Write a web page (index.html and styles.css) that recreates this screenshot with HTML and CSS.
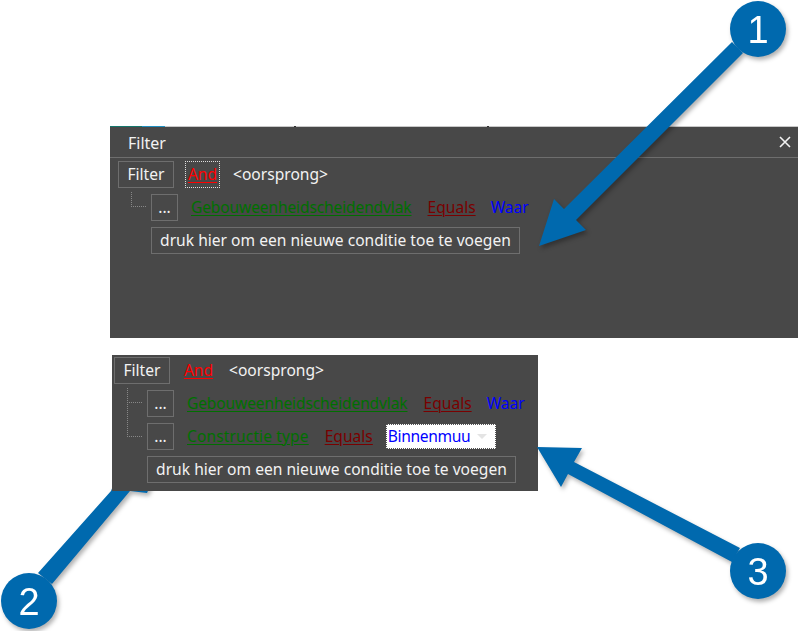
FILE: index.html
```html
<!doctype html>
<html lang="nl">
<head>
  <meta charset="UTF-8">
  <meta name="viewport" content="width=device-width, initial-scale=1.0">
  <title>Filter</title>
  <link rel="stylesheet" href="styles.css">
</head>
<body>
  <div class="page">
    <!-- arrow 2 runs under the second panel -->
    <svg class="arrows arrows-under" viewBox="0 0 798 631">
      <polygon points="38,573 52,584 130,491 147,493 175,430 125,455 111,491"/>
      <circle cx="29" cy="601" r="28"/>
      <text x="29" y="615">2</text>
    </svg>

    <div class="panel panel-dialog">
      <div class="top-strip"></div>
      <div class="title-bar">
        <span>Filter</span>
        <svg class="close" viewBox="0 0 12 12">
          <path d="M1 1L11 11M11 1L1 11"/>
        </svg>
      </div>
      <div class="filter-body">
        <div class="row">
          <button class="btn btn-filter">Filter</button>
          <a class="link op focused">And</a>
          <span class="origin">&lt;oorsprong&gt;</span>
        </div>
        <div class="row">
          <span class="branch"></span>
          <button class="btn btn-dots">...</button>
          <a class="link field field-long">Gebouweenheidscheidendvlak</a>
          <a class="link equals">Equals</a>
          <a class="link value">Waar</a>
        </div>
        <div class="row row-add">
          <button class="btn btn-add">druk hier om een nieuwe conditie toe te voegen</button>
        </div>
      </div>
    </div>

    <div class="panel panel-plain">
      <div class="filter-body">
        <div class="row">
          <button class="btn btn-filter">Filter</button>
          <a class="link op">And</a>
          <span class="origin">&lt;oorsprong&gt;</span>
        </div>
        <div class="row">
          <span class="branch"></span>
          <button class="btn btn-dots">...</button>
          <a class="link field field-long">Gebouweenheidscheidendvlak</a>
          <a class="link equals">Equals</a>
          <a class="link value">Waar</a>
        </div>
        <div class="row">
          <span class="branch branch-long"></span>
          <button class="btn btn-dots">...</button>
          <a class="link field field-short">Constructie type</a>
          <a class="link equals">Equals</a>
          <div class="select">
            <span class="select-text">Binnenmuu</span>
            <span class="select-caret"></span>
          </div>
        </div>
        <div class="row row-add">
          <button class="btn btn-add">druk hier om een nieuwe conditie toe te voegen</button>
        </div>
      </div>
    </div>

    <!-- arrows 1 and 3 lie on top -->
    <svg class="arrows arrows-over" viewBox="0 0 798 631">
      <polygon points="732,42 743,53 576,220 586,230 539,246 554,199 564,209"/>
      <circle cx="758" cy="29" r="28"/>
      <text x="758" y="43">1</text>
      <polygon points="740,548 732,562 568,474 561,487 537,447 582,448 574,462"/>
      <circle cx="758" cy="571" r="28"/>
      <text x="758" y="585">3</text>
    </svg>
  </div>
</body>
</html>
```

FILE: styles.css
```css
:root {
  --panel: #484848;
  --line: #6e6e6e;
  --text: #f2f2f2;
  --arrow: #0069ae;
}

* {
  box-sizing: border-box;
  margin: 0;
  padding: 0;
}

body {
  background: white;
  font-family: "Noto Sans", sans-serif;
  font-size: 15.6px;
  line-height: 21px;
}

.page {
  position: relative;
  width: 798px;
  height: 631px;
  overflow: hidden;
  padding-top: 127px;
}

.arrows {
  position: absolute;
  left: 0;
  top: 0;
  width: 798px;
  height: 631px;
  filter: drop-shadow(2px 3px 2px rgba(0, 0, 0, 0.3));
}

.arrows polygon,
.arrows circle {
  fill: var(--arrow);
}

.arrows text {
  fill: white;
  font-family: "Liberation Sans", sans-serif;
  font-size: 38px;
  text-anchor: middle;
}

.arrows-under {
  z-index: 0;
}

.arrows-over {
  z-index: 2;
}

.panel {
  position: relative;
  z-index: 1;
  background: var(--panel);
  color: var(--text);
}

.panel-dialog {
  height: 211px;
  margin-left: 110px;
}

.panel-plain {
  width: 426px;
  height: 136px;
  margin-top: 17px;
  margin-left: 112px;
  padding: 2px;
}

.top-strip {
  position: absolute;
  left: 0;
  right: 0;
  top: -1px;
  height: 1px;
  background: linear-gradient(90deg, #15766c 0, #15766c 32px, #1f8fc0 32px, #1f8fc0 55px, #c8c8c8 55px, #c8c8c8 184px, #333 184px, #333 186px, #c8c8c8 186px, #c8c8c8 377px, #333 377px, #333 379px, #c8c8c8 379px);
}

.title-bar {
  display: flex;
  justify-content: space-between;
  align-items: center;
  height: 31px;
  padding: 2px 7px 0 18px;
  border-bottom: 1px solid var(--line);
  font-size: 16px;
}

.close {
  width: 12px;
  height: 12px;
  margin-top: -2px;
  fill: none;
  stroke: #f2f2f2;
  stroke-width: 1.6;
}

.panel-dialog .filter-body {
  padding: 3px 8px 0;
}

.filter-body {
  display: flex;
  flex-direction: column;
  gap: 6px;
}

.row {
  display: flex;
  align-items: center;
  height: 27px;
}

.btn {
  height: 27px;
  background: transparent;
  border: 1px solid var(--line);
  color: var(--text);
  font: inherit;
  white-space: nowrap;
}

.btn-filter {
  width: 56px;
}

.btn-dots {
  width: 27px;
}

.btn-add {
  width: 369px;
}

.row-add {
  padding-left: 33px;
}

.branch {
  align-self: flex-start;
  flex: none;
  width: 15px;
  height: 15px;
  margin: -2px 5px 0 13px;
  border-left: 1px dotted #888;
  border-bottom: 1px dotted #888;
}

.branch-long {
  height: 33px;
  margin-top: -19px;
  margin-bottom: auto;
}

.link {
  text-decoration: underline;
  text-decoration-thickness: 1px;
  text-underline-offset: 2px;
  white-space: nowrap;
}

.origin {
  margin-left: 13px;
}

.op {
  width: 35px;
  margin-left: 11px;
  height: 27px;
  line-height: 25px;
  text-align: center;
  border: 1px dotted transparent;
  color: #ff0000;
}

.focused {
  border-color: #ddd;
}

.field {
  margin-left: 13px;
  color: #006f00;
}

.field-long {
  letter-spacing: -0.15px;
}

.field-short {
  letter-spacing: 0.1px;
}

.equals {
  margin-left: 16px;
  color: #7a0000;
}

.value {
  margin-left: 15px;
  color: #0000ff;
  text-decoration: none;
}

.select {
  display: flex;
  align-items: center;
  width: 110px;
  height: 25px;
  margin-left: 13px;
  padding-left: 1px;
  background: white;
  border: 1px dotted #555;
}

.select-text {
  flex: none;
  width: 81px;
  color: #0000ff;
  letter-spacing: -0.35px;
  white-space: nowrap;
}

.select-caret {
  margin-left: 8px;
  border-left: 5px solid transparent;
  border-right: 5px solid transparent;
  border-top: 5px solid #e4e4e4;
}
```
